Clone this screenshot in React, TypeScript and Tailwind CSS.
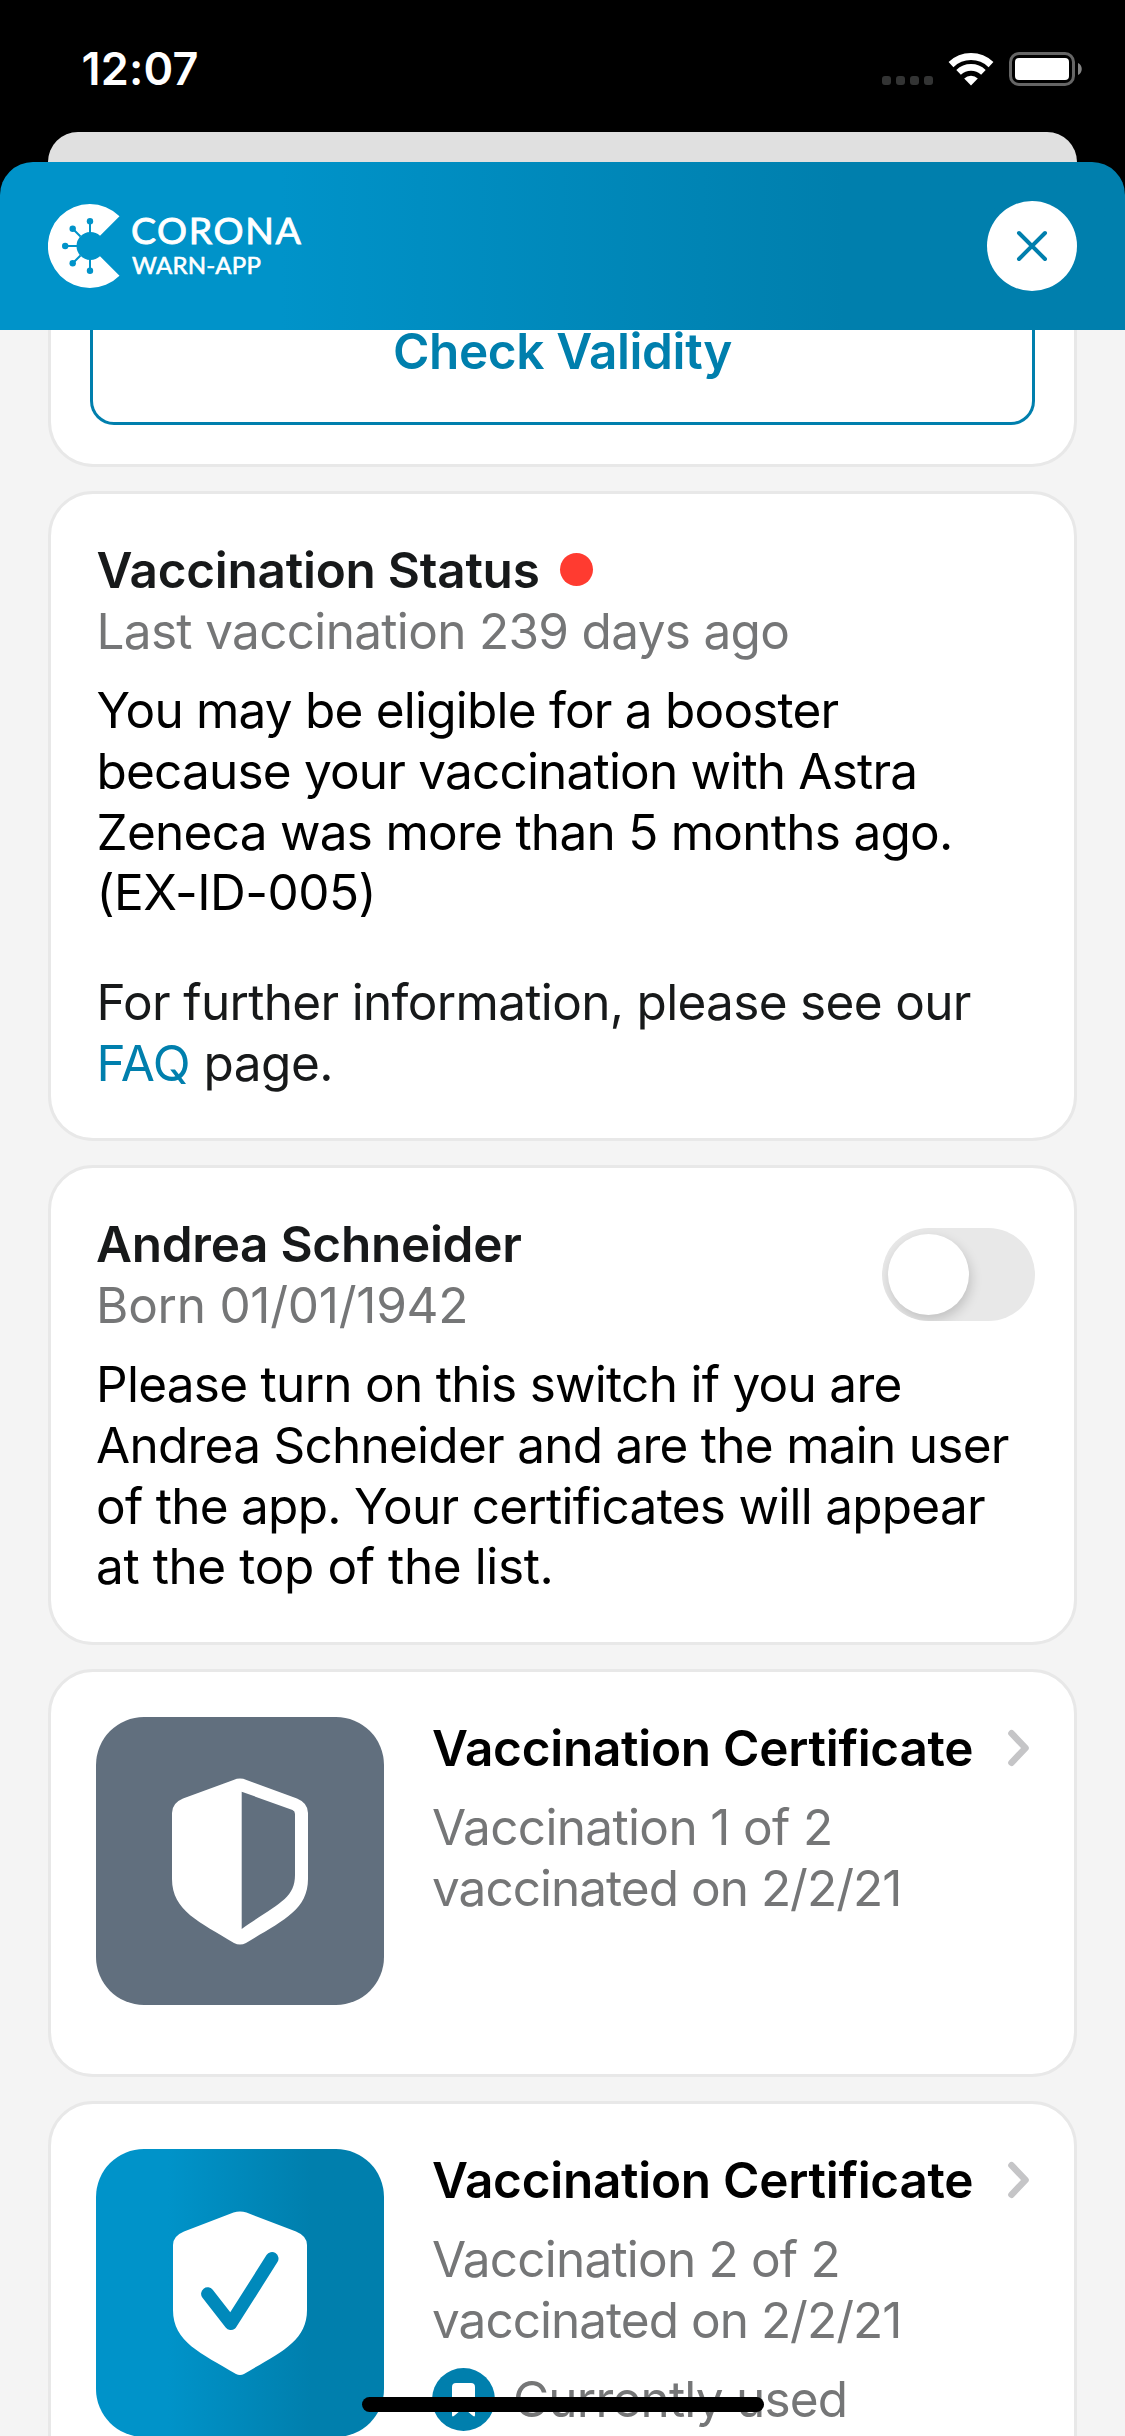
import React from "react";

function StatusBar() {
  return (
    <div className="flex h-[132px] items-start justify-between pl-[81.5px] pr-[42px]">
      <div className="mt-[41px] text-[45px] font-semibold leading-[55px] tracking-[0.2px] text-white">12:07</div>
      <div className="mt-[52px] flex items-start">
        <div className="mt-6 mr-[15px] flex gap-[5px]">
          <i className="h-[9px] w-[9px] rounded-[3px] bg-[#333434]" />
          <i className="h-[9px] w-[9px] rounded-[3px] bg-[#333434]" />
          <i className="h-[9px] w-[9px] rounded-[3px] bg-[#333434]" />
          <i className="h-[9px] w-[9px] rounded-[3px] bg-[#333434]" />
        </div>
        <svg className="mr-[15px]" width="46" height="34" viewBox="0 0 46 34" fill="none">
          <path d="M3 12.6A29 29 0 0 1 43 12.6" stroke="#fff" strokeWidth="7" />
          <path d="M10.6 20.4A17.9 17.9 0 0 1 35.4 20.4" stroke="#fff" strokeWidth="6.6" />
          <path d="M23 33.4L16.2 26.6A9.6 9.6 0 0 1 29.8 26.6Z" fill="#fff" />
        </svg>
        <svg width="74" height="34" viewBox="0 0 74 34" fill="none">
          <rect x="1.5" y="1.5" width="63" height="31" rx="8.5" stroke="#666" strokeWidth="3" />
          <rect x="6" y="6" width="54" height="22" rx="4" fill="#fff" />
          <path d="M69 11C74 13 74 21 69 23Z" fill="#858585" />
        </svg>
      </div>
    </div>
  );
}

function Logo() {
  return (
    <div className="flex">
      <svg width="72" height="84" viewBox="0 0 72 84" fill="none">
        <path d="M52 31.7L71.5 12.2A42 42 0 1 0 71.5 71.8L52 52.3A14 14 0 1 1 52 31.7Z" fill="#fff" />
        <g stroke="#0093c9" strokeWidth="2">
          <path d="M42 30V17M32.5 32.5L24.7 24.7M30 42H17M32.5 51.5L24.7 59.3M42 54V67" />
        </g>
        <g fill="#0093c9">
          <circle cx="42" cy="17.3" r="3.2" />
          <circle cx="24.7" cy="24.7" r="3.2" />
          <circle cx="17.2" cy="42" r="3.2" />
          <circle cx="24.7" cy="59.3" r="3.2" />
          <circle cx="42" cy="66.7" r="3.2" />
        </g>
      </svg>
      <div className="ml-[11px] mt-[6px] whitespace-nowrap font-['Lato'] text-white">
        <div className="text-[37.5px] leading-[40px] tracking-[1.6px] [-webkit-text-stroke:0.9px_white]">CORONA</div>
        <div className="ml-px text-[24px] leading-[29px] tracking-[0.2px] [-webkit-text-stroke:0.6px_white]">WARN-APP</div>
      </div>
    </div>
  );
}

function Header() {
  return (
    <div className="relative flex h-[168px] items-center justify-between rounded-t-[33px] bg-linear-to-r from-[#0093c9] from-25% to-[#007fad] to-75% px-12">
      <Logo />
      <button className="flex h-[90px] w-[90px] items-center justify-center rounded-full bg-white">
        <svg width="32" height="32" viewBox="0 0 32 32" fill="none" stroke="#007fad" strokeWidth="4" strokeLinecap="round">
          <path d="M3 3L29 29M29 3L3 29" />
        </svg>
      </button>
    </div>
  );
}

const card = "w-[1029px] shrink-0 rounded-[45px] border-[3px] border-[#e8e8e8] bg-white";

function Chevron() {
  return (
    <svg className="mt-[11px]" width="24" height="38" viewBox="0 0 24 38" fill="none" stroke="#c5c5c7" strokeWidth="6.6" strokeLinecap="round" strokeLinejoin="round">
      <path d="M4.5 4.3L18.5 19L4.5 33.7" />
    </svg>
  );
}

function HalfShield() {
  return (
    <svg width="136" height="168" viewBox="0 0 136 168">
      <path d="M61.5 3Q68 0.2 74.5 3L125 21.5Q136 26 136 36V102C136 134 108 145 74 166Q68 169 62 166C28 145 0 134 0 102V36Q0 26 11 21.5Z" fill="#fff" />
      <path d="M69.7 14.7L120.5 33Q123 34 123 37V98C123 122 105 127 69.7 152Z" fill="#616f7e" />
    </svg>
  );
}

function CheckShield() {
  return (
    <svg width="134" height="164" viewBox="0 0 134 164" fill="none">
      <path d="M60.5 1.6Q67 -0.6 73.5 1.6L123 20.5Q134 25 134 34V99C134 131 106 142 71 163Q67 165 63 163C28 142 0 131 0 99V34Q0 25 11 20.5Z" fill="#fff" />
      <path d="M34.6 82.8L57.8 112.6L99 47.6" stroke="#0089bb" strokeWidth="13" strokeLinecap="round" strokeLinejoin="round" />
    </svg>
  );
}

export default function App() {
  return (
    <div className="relative flex h-[2436px] w-[1125px] flex-col overflow-hidden bg-black font-['Inter',sans-serif]">
      <StatusBar />
      <div className="mx-12 h-[30px] shrink-0">
        <div className="h-[60px] rounded-t-[30px] bg-[#e0e0e0]" />
      </div>
      <Header />
      <main className="flex min-h-0 flex-1 flex-col items-center gap-6 bg-[#f4f4f4] text-[49.5px] leading-[61px] whitespace-nowrap">
        <section className="h-[137px] w-[1029px] shrink-0 rounded-b-[45px] border-[3px] border-t-0 border-[#e8e8e8] bg-white px-[39px]">
          <div className="h-[95px] rounded-b-[24px] border-[3px] border-t-0 border-[#007fad] text-center font-semibold leading-[42px] tracking-[-0.4px] text-[#007fad]">
            Check Validity
          </div>
        </section>

        <section className={`${card} h-[650px] px-[45.5px] pt-[46px]`}>
          <div className="flex items-center text-[#17191a]">
            <span className="font-semibold tracking-[-0.25px]">Vaccination Status</span>
            <span className="-mt-0.5 ml-[20px] h-[33px] w-[33px] rounded-full bg-[#ff3b30]" />
          </div>
          <p className="tracking-[-0.68px] text-[#757677]">Last vaccination 239 days ago</p>
          <div className="mt-[18px] leading-[60.75px] text-black">
            <p className="tracking-[-0.79px]">You may be eligible for a booster</p>
            <p className="tracking-[-0.81px]">because your vaccination with Astra</p>
            <p className="tracking-[-0.73px]">Zeneca was more than 5 months ago.</p>
            <p className="tracking-[-0.5px]">(EX-ID-005)</p>
          </div>
          <div className="mt-[49px] text-[#17191a]">
            <p className="tracking-[-0.68px]">For further information, please see our</p>
            <p className="tracking-[-0.5px]"><span className="text-[#007fad]">FAQ</span> page.</p>
          </div>
        </section>

        <section className={`${card} h-[480px] pl-[45px] pr-[39px] pt-[46px]`}>
          <div className="flex items-start justify-between">
            <div>
              <p className="font-semibold tracking-[-0.28px] text-[#17191a]">Andrea Schneider</p>
              <p className="tracking-[-0.25px] text-[#757677]">Born 01/01/1942</p>
            </div>
            <div className="mt-[14px] flex h-[93px] w-[153px] overflow-hidden rounded-full bg-[#e8e8e8] p-[6px]">
              <div className="h-[81px] w-[81px] rounded-full bg-white shadow-[2px_5px_12px_rgba(0,0,0,0.17)]" />
            </div>
          </div>
          <div className="mt-[18px] leading-[60.75px] text-black">
            <p className="tracking-[-0.72px]">Please turn on this switch if you are</p>
            <p className="tracking-[-0.74px]">Andrea Schneider and are the main user</p>
            <p className="tracking-[-0.73px]">of the app. Your certificates will appear</p>
            <p className="tracking-[-0.4px]">at the top of the list.</p>
          </div>
        </section>

        <section className={`${card} flex h-[408px] items-start pl-[45px] pr-[43px] pt-[45px]`}>
          <div className="flex h-[288px] w-[288px] items-center justify-center rounded-[48px] bg-[#616f7e]">
            <HalfShield />
          </div>
          <div className="ml-[48px] mt-px flex-1">
            <div className="flex items-start justify-between">
              <p className="font-semibold tracking-[-0.27px] text-black">Vaccination Certificate</p>
              <Chevron />
            </div>
            <div className="mt-[18px] text-[#757677]">
              <p className="tracking-[-0.65px]">Vaccination 1 of 2</p>
              <p className="tracking-[-0.98px]">vaccinated on 2/2/21</p>
            </div>
          </div>
        </section>

        <section className={`${card} flex h-[408px] items-start pl-[45px] pr-[43px] pt-[45px]`}>
          <div className="flex h-[288px] w-[288px] items-center justify-center rounded-[48px] bg-linear-to-r from-[#0093c9] from-25% to-[#007fad] to-75%">
            <CheckShield />
          </div>
          <div className="ml-[48px] mt-px flex-1">
            <div className="flex items-start justify-between">
              <p className="font-semibold tracking-[-0.27px] text-black">Vaccination Certificate</p>
              <Chevron />
            </div>
            <div className="mt-[18px] text-[#757677]">
              <p className="tracking-[-0.8px]">Vaccination 2 of 2</p>
              <p className="tracking-[-0.98px]">vaccinated on 2/2/21</p>
            </div>
            <div className="mt-[17px] flex items-start">
              <svg width="63" height="63" viewBox="0 0 63 63">
                <circle cx="31.5" cy="31.5" r="31.5" fill="#007fad" />
                <path d="M24 15H39Q43 15 43 19V47Q43 49.5 40.8 47.7L31.5 40L22.2 47.7Q20 49.5 20 47V19Q20 15 24 15Z" fill="#fff" />
              </svg>
              <span className="ml-[18px] mt-px tracking-[-0.8px] text-[#757677]">Currently used</span>
            </div>
          </div>
        </section>
      </main>
      <div className="absolute bottom-6 left-[362px] h-[15px] w-[402px] rounded-full bg-black" />
    </div>
  );
}
